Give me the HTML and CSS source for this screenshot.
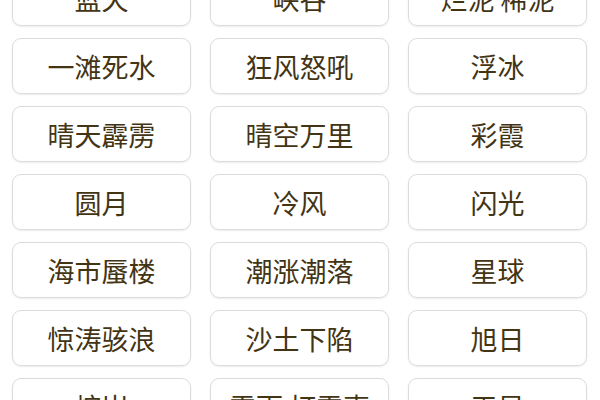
FILE: index.html
```html
<!DOCTYPE html>
<html lang="zh">
<head>
<meta charset="utf-8">
<link rel="stylesheet" href="styles.css">
</head>
<body>
<div class="grid">
  <div class="btn">蓝天</div>
  <div class="btn">峡谷</div>
  <div class="btn">烂泥 稀泥</div>
  <div class="btn">一滩死水</div>
  <div class="btn">狂风怒吼</div>
  <div class="btn">浮冰</div>
  <div class="btn">晴天霹雳</div>
  <div class="btn">晴空万里</div>
  <div class="btn">彩霞</div>
  <div class="btn">圆月</div>
  <div class="btn">冷风</div>
  <div class="btn">闪光</div>
  <div class="btn">海市蜃楼</div>
  <div class="btn">潮涨潮落</div>
  <div class="btn">星球</div>
  <div class="btn">惊涛骇浪</div>
  <div class="btn">沙土下陷</div>
  <div class="btn">旭日</div>
  <div class="btn">熔岩</div>
  <div class="btn">雷雨 打雷声</div>
  <div class="btn">天星</div>
</div>
</body>
</html>
```
FILE: styles.css
```css
html, body {
  margin: 0;
  padding: 0;
  background: #ffffff;
  overflow: hidden;
}
body {
  width: 600px;
  height: 400px;
  font-family: "Noto Sans CJK SC", "Noto Sans", sans-serif;
}
.grid {
  display: grid;
  grid-template-columns: repeat(3, 179px);
  column-gap: 19px;
  row-gap: 12px;
  padding: 0 12px;
  margin-top: -30px;
}
.btn {
  height: 56px;
  box-sizing: border-box;
  border: 1px solid #dcdcdc;
  border-radius: 9px;
  box-shadow: 0 1px 2px rgba(0, 0, 0, 0.08);
  display: flex;
  align-items: center;
  justify-content: center;
  font-size: 27px;
  color: #433414;
  white-space: nowrap;
}
```
